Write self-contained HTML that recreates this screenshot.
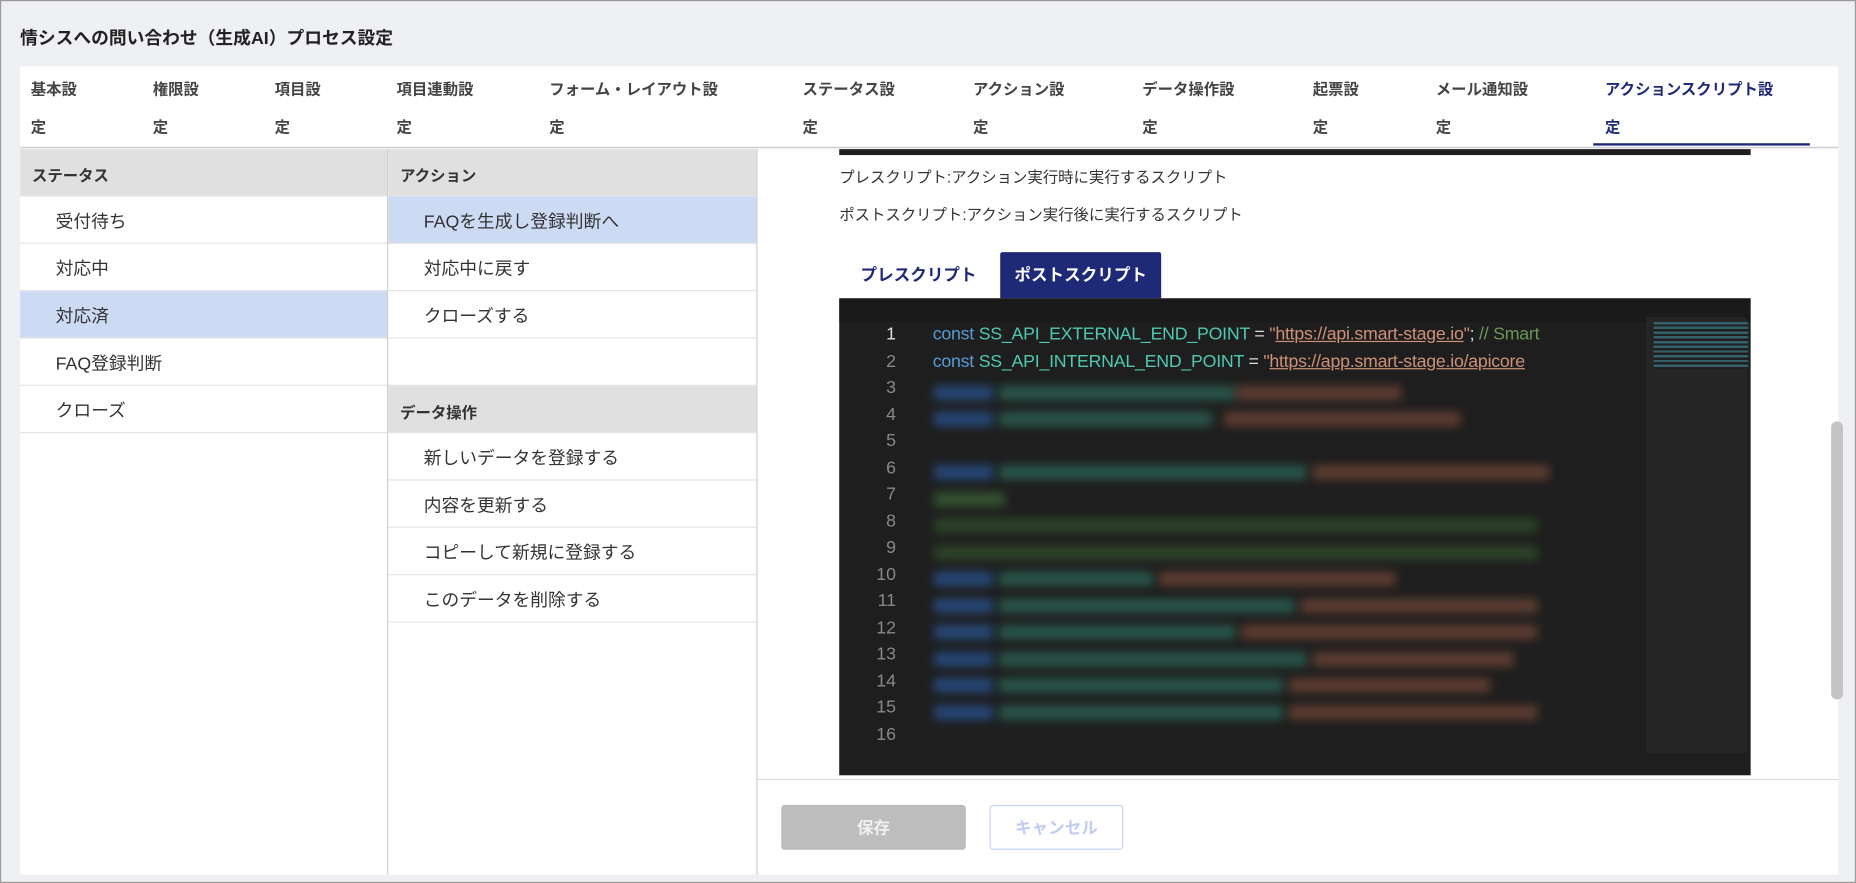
<!DOCTYPE html>
<html><head><meta charset="utf-8"><style>
*{box-sizing:border-box;margin:0;padding:0}
body{width:1856px;height:883px;overflow:hidden;background:#fff;font-family:"Liberation Sans","Noto Sans CJK JP",sans-serif}
#w{width:1568px;height:746px;transform:scale(1.18367,1.18365);transform-origin:0 0;position:relative;background:#eff0f4;border:1px solid #9a9a9a}
.a{position:absolute}
.title{left:16px;top:20px;font-size:15px;font-weight:bold;color:#222}
.tabs{left:16px;top:55px;width:1536px;height:69px;background:#fff;border-bottom:1px solid #ccc}
.tab{position:absolute;font-size:13px;font-weight:bold;color:#444;line-height:32px;top:4px}
.col{background:#fff;border-right:1px solid #ccc}
.h{height:40px;background:#e0e0e0;font-size:13px;font-weight:bold;color:#333;padding:12px 10px;border-bottom:1px solid #e6e6e6}
.it{height:40px;font-size:15px;color:#333;padding:10px 30px;border-bottom:1px solid #e3e3e3}
.sel{background:#ccdaf4}
.ln{position:absolute;left:0;width:48px;text-align:right;color:#888;font-size:15px}
.code{position:absolute;left:79px;font-size:15px;white-space:nowrap;font-family:"Liberation Sans Narrow","Liberation Sans",sans-serif;letter-spacing:-0.2px}
.bl{position:absolute;height:12px;filter:blur(4px);opacity:.7}
</style></head><body><div id="w">
<div class="a title">情シスへの問い合わせ（生成AI）プロセス設定</div>
<div class="a tabs">
<div class="tab" style="left:9px">基本設<br>定</div>
<div class="tab" style="left:112px">権限設<br>定</div>
<div class="tab" style="left:215px">項目設<br>定</div>
<div class="tab" style="left:318px">項目連動設<br>定</div>
<div class="tab" style="left:447px">フォーム・レイアウト設<br>定</div>
<div class="tab" style="left:661px">ステータス設<br>定</div>
<div class="tab" style="left:805px">アクション設<br>定</div>
<div class="tab" style="left:948px">データ操作設<br>定</div>
<div class="tab" style="left:1092px">起票設<br>定</div>
<div class="tab" style="left:1196px">メール通知設<br>定</div>
<div class="tab" style="left:1339px;color:#1e2a78">アクションスクリプト設<br>定</div>
<div class="a" style="left:1329px;top:65px;width:183px;height:2px;background:#1e2a78"></div>
</div>
<div class="a col" style="left:16px;top:125px;width:311px;height:613px">
<div class="h">ステータス</div>
<div class="it">受付待ち</div><div class="it">対応中</div><div class="it sel">対応済</div><div class="it">FAQ登録判断</div><div class="it">クローズ</div>
</div>
<div class="a col" style="left:327px;top:125px;width:312px;height:613px">
<div class="h">アクション</div>
<div class="it sel">FAQを生成し登録判断へ</div><div class="it">対応中に戻す</div><div class="it">クローズする</div><div class="it"></div>
<div class="h">データ操作</div>
<div class="it">新しいデータを登録する</div><div class="it">内容を更新する</div><div class="it">コピーして新規に登録する</div><div class="it">このデータを削除する</div>
</div>
<div class="a" style="left:639px;top:125px;width:913px;height:613px;background:#fff">
<div class="a" style="left:69px;top:0;width:770px;height:5px;background:#1e1e1e"></div>
<div class="a" style="left:69px;top:13px;font-size:13px;color:#333">プレスクリプト:アクション実行時に実行するスクリプト</div>
<div class="a" style="left:69px;top:45px;font-size:13px;color:#333">ポストスクリプト:アクション実行後に実行するスクリプト</div>
<div class="a" style="left:69px;top:87px;width:134px;height:39px;font-size:14px;font-weight:bold;color:#1e2a78;text-align:center;line-height:39px">プレスクリプト</div>
<div class="a" style="left:205px;top:87px;width:136px;height:39px;background:#1e2a78;font-size:14px;font-weight:bold;color:#fff;text-align:center;line-height:39px;border-radius:2px 2px 0 0">ポストスクリプト</div>
<div class="a" style="left:69px;top:126px;width:770px;height:403px;background:#1e1e1e;overflow:hidden">
<div class="a" style="left:0;top:0;width:770px;height:20px;background:#1a1a1a"></div>
<div class="ln" style="top:22px;color:#ddd">1</div><div class="ln" style="top:44.5px">2</div><div class="ln" style="top:67px">3</div><div class="ln" style="top:89.5px">4</div><div class="ln" style="top:112px">5</div><div class="ln" style="top:134.5px">6</div><div class="ln" style="top:157px">7</div><div class="ln" style="top:179.5px">8</div><div class="ln" style="top:202px">9</div><div class="ln" style="top:224.5px">10</div><div class="ln" style="top:247px">11</div><div class="ln" style="top:269.5px">12</div><div class="ln" style="top:292px">13</div><div class="ln" style="top:314.5px">14</div><div class="ln" style="top:337px">15</div><div class="ln" style="top:359.5px">16</div>
<div class="code" style="top:22px;width:594px;overflow:hidden"><span style="color:#569cd6">const</span> <span style="color:#4ec9b0">SS_API_EXTERNAL_END_POINT</span> <span style="color:#ddd">=</span> <span style="color:#ce9178">"<u>https://api.smart-stage.io</u>"</span><span style="color:#ddd">;</span> <span style="color:#6a9955">// Smart</span></div>
<div class="code" style="top:44.5px;width:594px;overflow:hidden"><span style="color:#569cd6">const</span> <span style="color:#4ec9b0">SS_API_INTERNAL_END_POINT</span> <span style="color:#ddd">=</span> <span style="color:#ce9178">"<u>https://app.smart-stage.io/apicore</u></span></div>
<div class="bl" style="left:80px;top:74px;width:50px;background:#2a5aa0"></div><div class="bl" style="left:135px;top:74px;width:200px;background:#2e6e5e"></div><div class="bl" style="left:335px;top:74px;width:140px;background:#7a4a3a"></div>
<div class="bl" style="left:80px;top:96px;width:50px;background:#2a5aa0"></div><div class="bl" style="left:135px;top:96px;width:180px;background:#2e6e5e"></div><div class="bl" style="left:325px;top:96px;width:200px;background:#7a4a3a"></div>
<div class="bl" style="left:80px;top:141px;width:50px;background:#2a5aa0"></div><div class="bl" style="left:135px;top:141px;width:260px;background:#2e6e5e"></div><div class="bl" style="left:400px;top:141px;width:200px;background:#7a4a3a"></div>
<div class="bl" style="left:80px;top:164px;width:60px;background:#3e6a3a"></div>
<div class="bl" style="left:80px;top:186px;width:510px;background:#34542e"></div>
<div class="bl" style="left:80px;top:209px;width:510px;background:#34542e"></div>
<div class="bl" style="left:80px;top:231px;width:50px;background:#2a5aa0"></div><div class="bl" style="left:135px;top:231px;width:130px;background:#2e6e5e"></div><div class="bl" style="left:270px;top:231px;width:200px;background:#7a4a3a"></div>
<div class="bl" style="left:80px;top:254px;width:50px;background:#2a5aa0"></div><div class="bl" style="left:135px;top:254px;width:250px;background:#2e6e5e"></div><div class="bl" style="left:390px;top:254px;width:200px;background:#7a4a3a"></div>
<div class="bl" style="left:80px;top:276px;width:50px;background:#2a5aa0"></div><div class="bl" style="left:135px;top:276px;width:200px;background:#2e6e5e"></div><div class="bl" style="left:340px;top:276px;width:250px;background:#7a4a3a"></div>
<div class="bl" style="left:80px;top:299px;width:50px;background:#2a5aa0"></div><div class="bl" style="left:135px;top:299px;width:260px;background:#2e6e5e"></div><div class="bl" style="left:400px;top:299px;width:170px;background:#7a4a3a"></div>
<div class="bl" style="left:80px;top:321px;width:50px;background:#2a5aa0"></div><div class="bl" style="left:135px;top:321px;width:240px;background:#2e6e5e"></div><div class="bl" style="left:380px;top:321px;width:170px;background:#7a4a3a"></div>
<div class="bl" style="left:80px;top:344px;width:50px;background:#2a5aa0"></div><div class="bl" style="left:135px;top:344px;width:240px;background:#2e6e5e"></div><div class="bl" style="left:380px;top:344px;width:210px;background:#7a4a3a"></div>
<div class="a" style="left:682px;top:16px;width:85px;height:368px;background:#252525"></div>
<div class="a" style="left:688px;top:20px;width:80px;height:40px;background:repeating-linear-gradient(#3a7a8a 0 2px,#1e1e1e 2px 4px);opacity:.7"></div>
</div>
<div class="a" style="left:907px;top:230px;width:10px;height:235px;background:#c4c4c4;border-radius:5px"></div>
<div class="a" style="left:0;top:532px;width:913px;height:1px;background:#ddd"></div>
<div class="a" style="left:20px;top:554px;width:156px;height:38px;background:#bdbdbd;border-radius:3px;color:#f0f0f0;font-size:14px;font-weight:bold;text-align:center;line-height:38px">保存</div>
<div class="a" style="left:196px;top:554px;width:113px;height:38px;background:#fff;border:1px solid #c8d6f4;border-radius:3px;color:#c0cdf0;font-size:14px;font-weight:bold;text-align:center;line-height:36px">キャンセル</div>
</div>
</div></body></html>
